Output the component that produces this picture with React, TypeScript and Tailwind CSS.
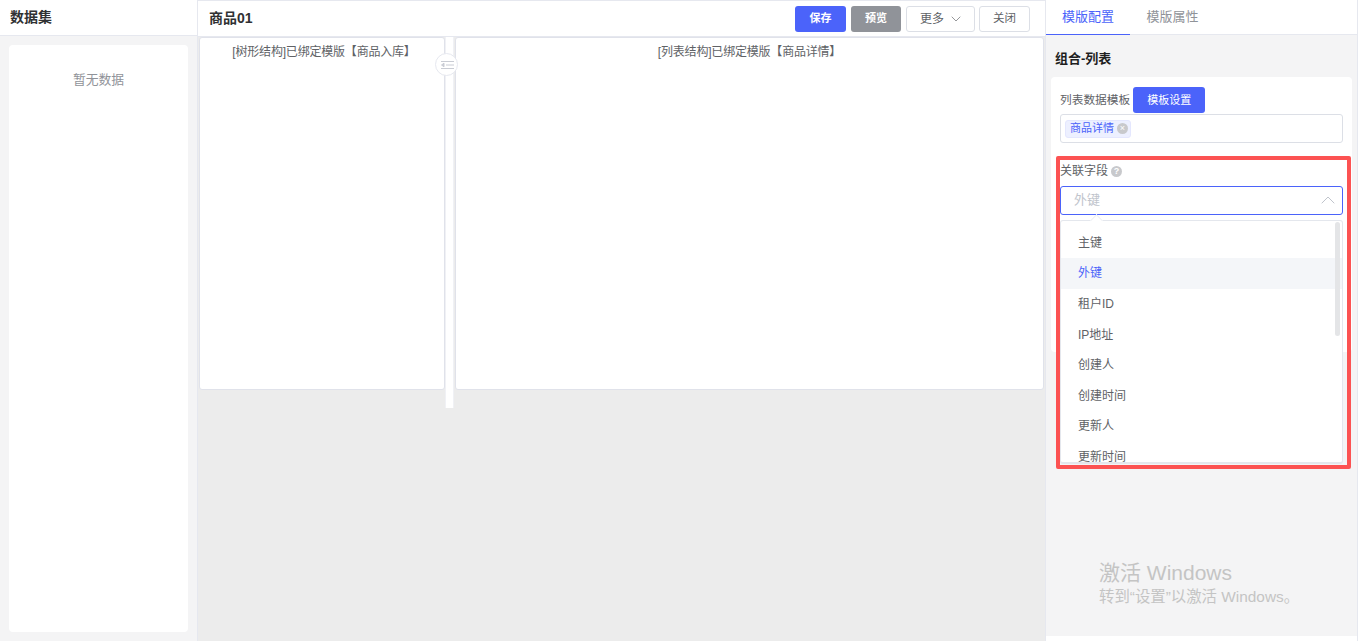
import { ChevronDown, ChevronUp } from "lucide-react";

const options = ["主键", "外键", "租户ID", "IP地址", "创建人", "创建时间", "更新人", "更新时间"];

const App = () => {
  return (
    <div className="relative flex h-[641px] w-[1360px] overflow-hidden bg-white text-[12px] text-[#606266] [font-family:'Liberation_Sans','Noto_Sans_CJK_SC',sans-serif]">
      {/* dataset */}
      <aside className="flex w-[198px] flex-col border-r border-[#e6e8ef]">
        <div className="flex h-[36px] items-center border-b border-[#e6e8ef] pl-[10px] text-[14px] font-bold text-[#303133]">
          数据集
        </div>
        <div className="flex-1 bg-[#f4f4f5] p-[9px]">
          <div className="h-full rounded bg-white pt-[25px] text-center text-[12.8px] text-[#909399]">
            暂无数据
          </div>
        </div>
      </aside>

      {/* canvas */}
      <main className="flex w-[847px] flex-col bg-[#ececec]">
        <div className="flex h-[37px] items-center justify-between border-b border-t border-[#e6e8ef] bg-white pl-[11px] pr-[15px]">
          <span className="text-[14px] font-bold text-[#303133]">商品01</span>
          <div className="flex items-center">
            <button className="h-[26px] w-[51px] rounded-[3px] bg-[#4b63fa] text-[11px] font-bold text-white">保存</button>
            <button className="ml-[5px] h-[26px] w-[50px] rounded-[3px] bg-[#909399] text-[11px] font-bold text-white">预览</button>
            <button className="ml-[5px] flex h-[26px] w-[69px] items-center gap-[4px] rounded-[3px] border border-[#dcdfe6] bg-white pl-[13px]">
              更多
              <ChevronDown size={16} strokeWidth={1} />
            </button>
            <button className="ml-[4px] h-[26px] w-[51px] rounded-[3px] border border-[#dcdfe6] bg-white text-[11.5px]">关闭</button>
          </div>
        </div>
        <div className="relative flex items-start pl-[1px]">
          <div className="h-[353px] w-[246px] rounded-[3px] border border-[#e0e2ea] bg-white pl-[4px] pt-[5px] text-center tracking-[-0.2px]">
            [树形结构]已绑定模版【商品入库】
          </div>
          <div className="relative h-[371px] w-[9px] shrink-0 border-x border-[#f0f1f5] bg-white">
            <div className="absolute left-[-11px] top-[16px] flex h-[23px] w-[23px] items-center justify-center rounded-full border border-[#e6e8ef] bg-white">
              <svg width="14" height="10" viewBox="0 0 14 10" fill="none" stroke="#c9ccd4" strokeWidth="1">
                <path d="M1 1.5H14M6 5H14M1 8.5H14" />
                <path d="M4 3.2L1.5 5L4 6.8Z" fill="#c9ccd4" />
              </svg>
            </div>
          </div>
          <div className="ml-[1px] h-[353px] w-[589px] rounded-[3px] border border-[#e0e2ea] bg-white pt-[5px] text-center tracking-[-0.2px]">
            [列表结构]已绑定模版【商品详情】
          </div>
        </div>
      </main>

      {/* settings */}
      <aside className="mr-[2px] flex flex-1 flex-col border-l border-r border-[#e6e8ef] pb-[5px]">
        <div className="flex h-[35px] shrink-0 border-b border-[#e6e8ef] text-[13px]">
          <div className="flex h-[35px] w-[84px] items-center justify-center border-b border-[#4b63fa] text-[#4b63fa]">模版配置</div>
          <div className="flex h-[34px] w-[85px] items-center justify-center text-[#909399]">模版属性</div>
        </div>
        <div className="flex-1 bg-[#f4f4f5] pl-[5px] pr-[5px]">
          <div className="pb-[9px] pl-[4px] pt-[15px] text-[13px] font-bold leading-[18px] text-[#1f1f1f]">组合-列表</div>
          <div className="h-[275px] rounded bg-white pl-[9px] pr-[9px] pt-[10px]">
            <div className="flex items-center">
              <span className="text-[11.7px]">列表数据模板</span>
              <button className="ml-[3px] h-[26px] w-[72px] rounded-[3px] bg-[#4b63fa] text-[11px] text-white">模板设置</button>
            </div>
            <div className="mt-[1px] flex h-[29px] items-center rounded-[3px] border border-[#dcdfe6] pl-[4px]">
              <span className="flex h-[18px] items-center gap-[3px] rounded-[3px] border border-[#e4e7fe] bg-[#edf0ff] pl-[4px] pr-[2px] text-[11px] text-[#4b63fa]">
                商品详情
                <span className="flex h-[11px] w-[11px] items-center justify-center rounded-full bg-[#c8c9cc] text-[9px] leading-none text-white">×</span>
              </span>
            </div>
            <div className="mt-[19px] flex items-center gap-[3px]">
              关联字段
              <span className="flex h-[11px] w-[11px] items-center justify-center rounded-full bg-[#c8c9cc] text-[9px] font-bold leading-none text-white">?</span>
            </div>
            <div className="mt-[6px] flex h-[29px] items-center justify-between rounded-[3px] border border-[#4b63fa] pb-[2px] pl-[13px] pr-[2px] text-[13px] text-[#c0c4cc]">
              外键
              <ChevronUp size={24} strokeWidth={1} />
            </div>
          </div>
        </div>
      </aside>

      {/* dropdown */}
      <div className="absolute left-[1060px] top-[220px] h-[244px] w-[283px] overflow-hidden rounded-[3px] border border-b-2 border-[#e4e7ed] bg-white">
        <div className="pt-[6.5px]">
          {options.map((option) => (
            <div
              key={option}
              className={
                option === "外键"
                  ? "flex h-[30.6px] items-center bg-[#f4f6f9] pl-[17px] text-[#4b63fa]"
                  : "flex h-[30.6px] items-center pl-[17px] text-[#606266]"
              }
            >
              {option}
            </div>
          ))}
        </div>
        <div className="absolute right-[2px] top-[1px] h-[114px] w-[5px] rounded-full bg-[#e4e5e7]" />
      </div>
      <div className="absolute left-[1092px] top-[216px] h-[9px] w-[9px] rotate-45 border-l border-t border-[#eef0f4] bg-white" />

      {/* annotation */}
      <div className="absolute left-[1056px] top-[156px] h-[313px] w-[295px] rounded-[2px] border-[4px] border-[#fc5252]" />

      {/* activation watermark */}
      <div className="absolute left-[1099px] top-[560px] text-[#c4c4c4]">
        <div className="text-[21px] leading-[26px]">激活 Windows</div>
        <div className="mt-[1px] text-[15.4px] leading-[20px]">转到“设置”以激活 Windows。</div>
      </div>
    </div>
  );
};

export default App;
